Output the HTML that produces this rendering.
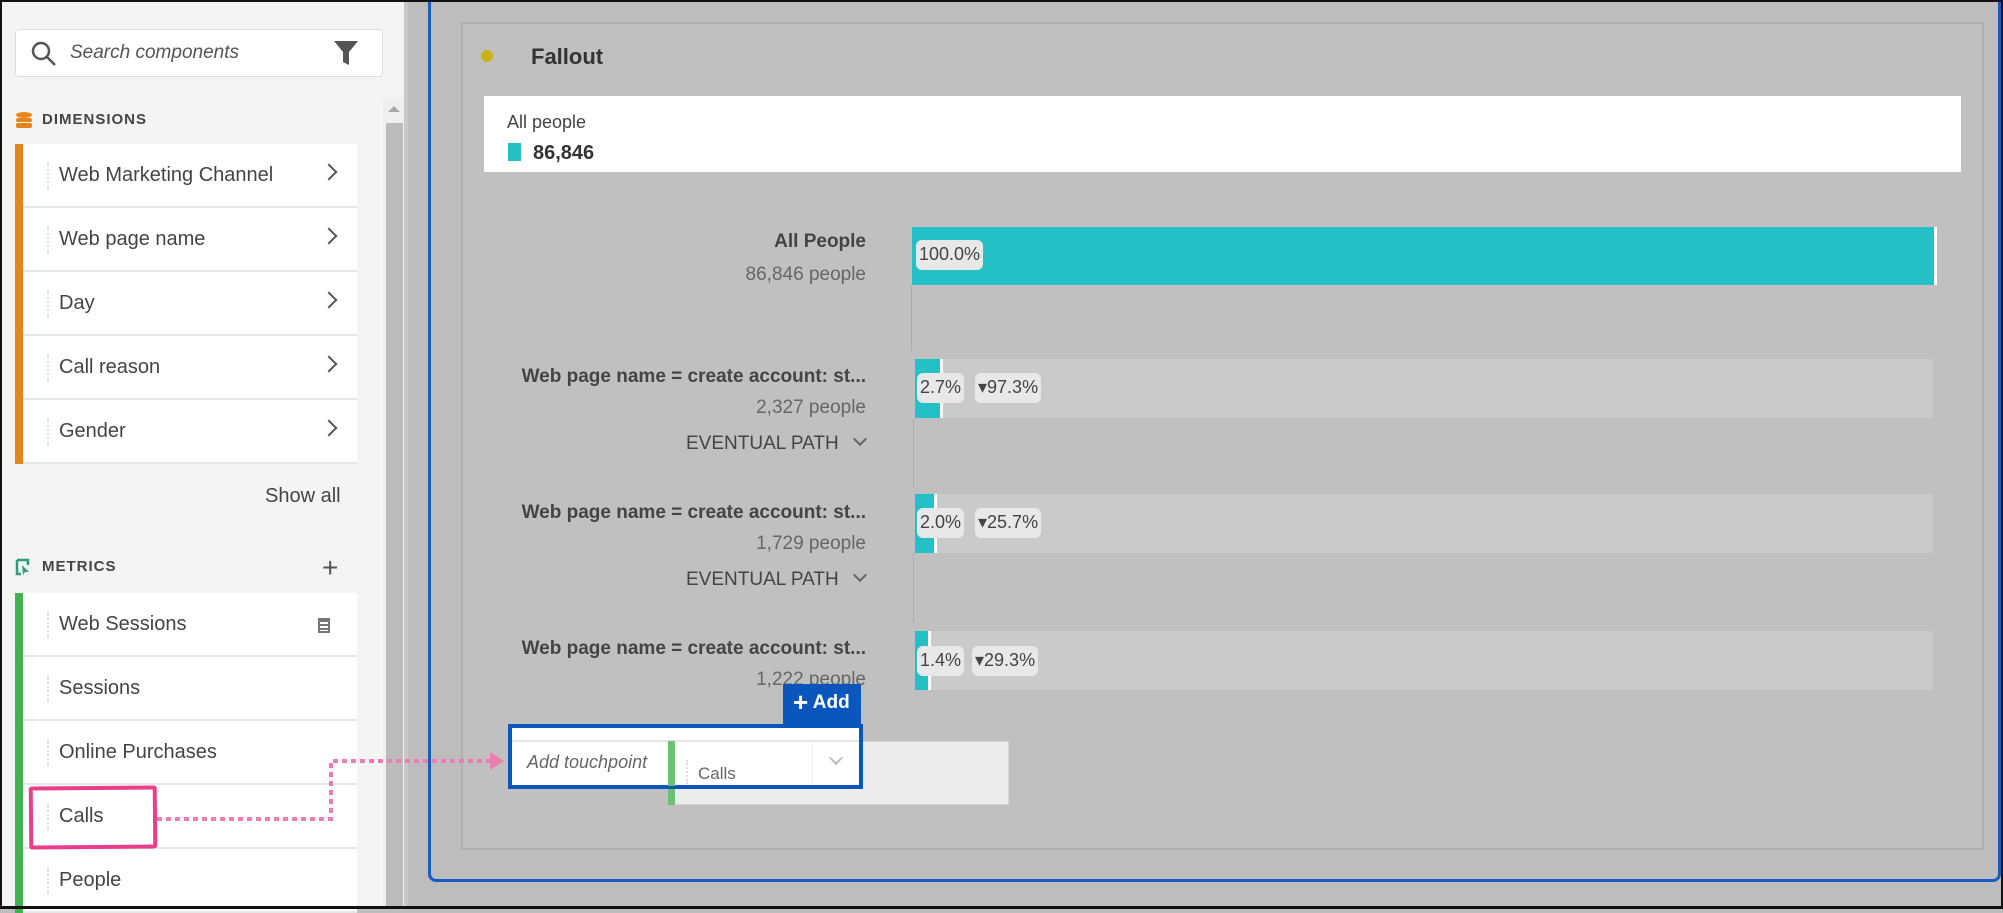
<!DOCTYPE html>
<html><head><meta charset="utf-8"><style>
*{margin:0;padding:0;box-sizing:border-box}
body{width:2003px;height:909px;overflow:hidden;background:#bdbdbd;font-family:"Liberation Sans",sans-serif;position:relative;color:#4b4b4b}
.a{position:absolute}
.row{position:absolute;left:15px;width:342px;height:64px;background:#fff;border-bottom:2px solid #e6e6e6;font-size:20px;color:#444}
.row .bar{position:absolute;left:0;top:0;bottom:-2px;width:8px}
.row .dots{position:absolute;left:32px;top:18px;height:28px;border-left:2px dotted #ddd}
.row span{position:absolute;left:44px;top:20px}
.row .chev{position:absolute;right:22px;top:22px;width:12px;height:12px;border-right:2px solid #555;border-top:2px solid #555;transform:rotate(45deg)}
.lbl{position:absolute;right:1137px;text-align:right;font-size:19px}
.pill{position:absolute;background:#e8e8e8;border-radius:6px;font-size:18px;color:#444;padding:4px 3px;height:30px}
</style></head><body>
<!-- left panel -->
<div class="a" style="left:0;top:0;width:408px;height:909px;background:#f4f4f4;border-right:4px solid #c8c8c8"></div>
<div class="a" style="left:383px;top:97px;width:21px;height:812px;background:#efefef"></div>
<div class="a" style="left:386px;top:123px;width:17px;height:786px;background:#bcbcbc"></div>
<div class="a" style="left:388px;top:106px;width:0;height:0;border-left:6px solid transparent;border-right:6px solid transparent;border-bottom:6px solid #aaa"></div>
<div class="a" style="left:15px;top:29px;width:368px;height:48px;background:#fff;border:1px solid #ddd;border-radius:4px"></div>
<svg class="a" style="left:30px;top:40px" width="28" height="28" viewBox="0 0 28 28"><circle cx="11" cy="11" r="8" fill="none" stroke="#555" stroke-width="2.5"/><line x1="17" y1="17" x2="25" y2="25" stroke="#555" stroke-width="2.5"/></svg>
<div class="a" style="left:70px;top:42px;font-size:19px;font-style:italic;color:#555">Search components</div>
<svg class="a" style="left:333px;top:40px" width="26" height="26" viewBox="0 0 26 26"><path d="M1 1H25L16 12V25L10 22V12Z" fill="#555"/></svg>
<svg class="a" style="left:15px;top:111px" width="18" height="18" viewBox="0 0 18 18"><ellipse cx="9" cy="4" rx="8" ry="3" fill="#e68619"/><rect x="1" y="7" width="16" height="4" rx="2" fill="#e68619"/><rect x="1" y="12" width="16" height="5" rx="2" fill="#e68619"/></svg>
<div class="a" style="left:42px;top:111px;font-size:15px;font-weight:bold;letter-spacing:1px;color:#444">DIMENSIONS</div>
<div class="row" style="top:144px"><div class="bar" style="background:#e68619"></div><div class="dots"></div><span>Web Marketing Channel</span><div class="chev"></div></div>
<div class="row" style="top:208px"><div class="bar" style="background:#e68619"></div><div class="dots"></div><span>Web page name</span><div class="chev"></div></div>
<div class="row" style="top:272px"><div class="bar" style="background:#e68619"></div><div class="dots"></div><span>Day</span><div class="chev"></div></div>
<div class="row" style="top:336px"><div class="bar" style="background:#e68619"></div><div class="dots"></div><span>Call reason</span><div class="chev"></div></div>
<div class="row" style="top:400px"><div class="bar" style="background:#e68619"></div><div class="dots"></div><span>Gender</span><div class="chev"></div></div>
<div class="a" style="left:265px;top:485px;font-size:20px;color:#444">Show all</div>
<svg class="a" style="left:15px;top:558px" width="16" height="18" viewBox="0 0 16 18"><path d="M2 2H13V7M2 2V16H6" fill="none" stroke="#2d9d78" stroke-width="2.5"/><path d="M7 7L14 14H10L8 17Z" fill="#2d9d78"/></svg>
<div class="a" style="left:42px;top:558px;font-size:15px;font-weight:bold;letter-spacing:1px;color:#444">METRICS</div>
<div class="a" style="left:322px;top:556px;font-size:28px;color:#555;line-height:24px">+</div>
<div class="row" style="top:593px"><div class="bar" style="background:#3fb34f"></div><div class="dots"></div><span>Web Sessions</span><div class="a" style="left:303px;top:25px;width:12px;height:15px;border:2px solid #777;background:repeating-linear-gradient(#777 0 2px,#fff 2px 4px)"></div></div>
<div class="row" style="top:657px"><div class="bar" style="background:#3fb34f"></div><div class="dots"></div><span>Sessions</span></div>
<div class="row" style="top:721px"><div class="bar" style="background:#3fb34f"></div><div class="dots"></div><span>Online Purchases</span></div>
<div class="row" style="top:785px"><div class="bar" style="background:#3fb34f"></div><div class="dots"></div><span>Calls</span></div>
<div class="row" style="top:849px"><div class="bar" style="background:#3fb34f"></div><div class="dots"></div><span>People</span></div>
<!-- main -->
<div class="a" style="left:428px;top:-10px;width:1573px;height:892px;border:3px solid #1a5bbf;border-radius:8px;background:#bdbdbd"></div>
<div class="a" style="left:461px;top:22px;width:1523px;height:828px;border:2px solid #b0b0b0;background:#c0c0c0"></div>
<div class="a" style="left:481px;top:50px;width:12px;height:12px;border-radius:50%;background:#c9b117"></div>
<div class="a" style="left:531px;top:44px;font-size:22px;font-weight:bold;color:#333">Fallout</div>
<div class="a" style="left:484px;top:96px;width:1477px;height:76px;background:#fff"></div>
<div class="a" style="left:507px;top:112px;font-size:18px;color:#444">All people</div>
<div class="a" style="left:508px;top:143px;width:13px;height:18px;background:#25bfc6"></div>
<div class="a" style="left:533px;top:142px;font-size:20px;font-weight:bold;color:#333">86,846</div>
<!-- funnel -->
<div class="lbl" style="top:231px;font-weight:bold;color:#444">All People</div>
<div class="lbl" style="top:264px;color:#666">86,846 people</div>
<div class="a" style="left:912px;top:227px;width:1025px;height:58px;background:#25bfc6;border-right:3px solid #fff"></div>
<div class="a" style="left:911px;top:285px;width:1px;height:66px;background:#aaa"></div>
<div class="pill" style="left:916px;top:240px">100.0%</div>

<div class="lbl" style="top:366px;font-weight:bold;color:#444">Web page name = create account: st...</div>
<div class="lbl" style="top:397px;color:#666">2,327 people</div>
<div class="a" style="left:686px;top:433px;font-size:19px;color:#444">EVENTUAL PATH</div>
<div class="a" style="left:855px;top:434px;width:10px;height:10px;border-right:2px solid #666;border-bottom:2px solid #666;transform:rotate(45deg)"></div>
<div class="a" style="left:915px;top:359px;width:1018px;height:59px;background:#cacaca"></div>
<div class="a" style="left:915px;top:359px;width:28px;height:59px;background:#25bfc6;border-right:3px solid #fff"></div>
<div class="a" style="left:913px;top:418px;width:1px;height:70px;background:#aaa"></div>
<div class="pill" style="left:917px;top:373px">2.7%</div>
<div class="pill" style="left:975px;top:373px">▾97.3%</div>

<div class="lbl" style="top:502px;font-weight:bold;color:#444">Web page name = create account: st...</div>
<div class="lbl" style="top:533px;color:#666">1,729 people</div>
<div class="a" style="left:686px;top:569px;font-size:19px;color:#444">EVENTUAL PATH</div>
<div class="a" style="left:855px;top:570px;width:10px;height:10px;border-right:2px solid #666;border-bottom:2px solid #666;transform:rotate(45deg)"></div>
<div class="a" style="left:915px;top:494px;width:1018px;height:59px;background:#cacaca"></div>
<div class="a" style="left:915px;top:494px;width:22px;height:59px;background:#25bfc6;border-right:3px solid #fff"></div>
<div class="a" style="left:913px;top:553px;width:1px;height:70px;background:#aaa"></div>
<div class="pill" style="left:917px;top:508px">2.0%</div>
<div class="pill" style="left:975px;top:508px">▾25.7%</div>

<div class="lbl" style="top:638px;font-weight:bold;color:#444">Web page name = create account: st...</div>
<div class="lbl" style="top:669px;color:#666">1,222 people</div>
<div class="a" style="left:915px;top:631px;width:1018px;height:59px;background:#cacaca"></div>
<div class="a" style="left:915px;top:631px;width:16px;height:59px;background:#25bfc6;border-right:3px solid #fff"></div>
<div class="pill" style="left:917px;top:646px">1.4%</div>
<div class="pill" style="left:972px;top:646px">▾29.3%</div>
<!-- add touchpoint -->
<div class="a" style="left:668px;top:741px;width:341px;height:64px;background:#ececec;border:1px solid #d6d6d6"></div>
<div class="a" style="left:668px;top:741px;width:7px;height:64px;background:#6dc26d"></div>
<div class="a" style="left:783px;top:684px;width:78px;height:42px;background:#0a56bd;color:#fff;font-weight:bold;font-size:19px;padding:8px 0 0 10px"><span style="font-size:26px;line-height:20px;vertical-align:-3px">+</span> Add</div>
<div class="a" style="left:508px;top:724px;width:355px;height:65px;border:4px solid #0a56bd;background:#fff"></div>
<div class="a" style="left:512px;top:740px;width:347px;height:45px;background:#fff;border-top:2px solid #e5e5e5"></div>
<div class="a" style="left:527px;top:752px;font-size:18px;font-style:italic;color:#666">Add touchpoint</div>
<div class="a" style="left:668px;top:741px;width:7px;height:45px;background:#6dc26d"></div>
<div class="a" style="left:686px;top:760px;height:24px;border-left:2px dotted #ddd"></div>
<div class="a" style="left:698px;top:764px;font-size:17px;color:#666">Calls</div>
<div class="a" style="left:812px;top:741px;width:1px;height:44px;background:#eee"></div>
<div class="a" style="left:831px;top:753px;width:10px;height:10px;border-right:2px solid #bbb;border-bottom:2px solid #bbb;transform:rotate(45deg)"></div>
<!-- pink annotation -->
<div class="a" style="left:29px;top:786px;width:128px;height:63px;border:4px solid #e83e8c;border-radius:3px;transform:rotate(-0.5deg)"></div>
<svg class="a" style="left:0;top:0" width="520" height="909"><path d="M157 819H331V761H490" fill="none" stroke="#ec7db0" stroke-width="4" stroke-dasharray="5 4"/><path d="M490 752L504 761L490 770Z" fill="#ec7db0"/></svg>
<!-- black frame -->
<div class="a" style="left:0;top:0;width:2003px;height:909px;border:2px solid #111;border-bottom-width:3px"></div>
</body></html>
